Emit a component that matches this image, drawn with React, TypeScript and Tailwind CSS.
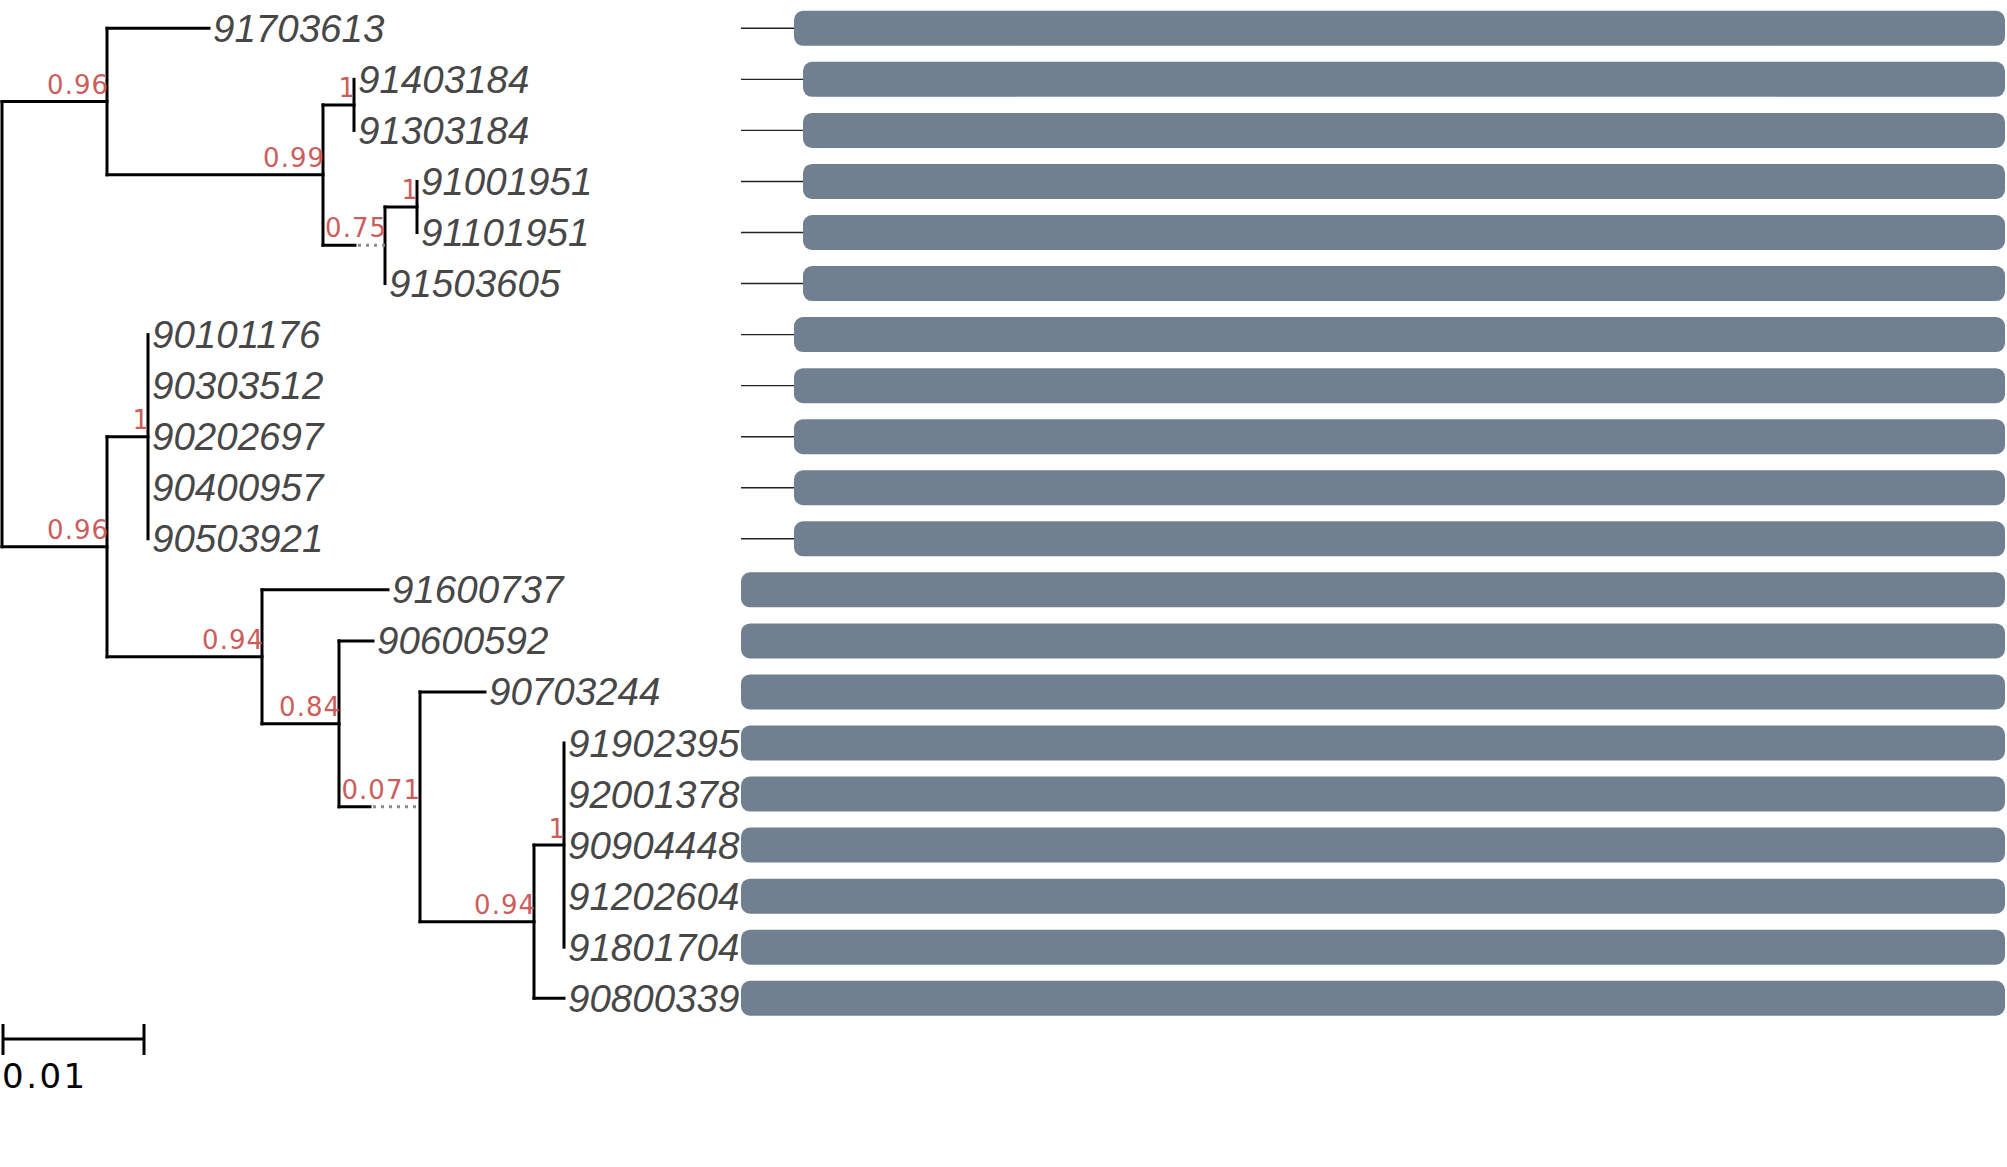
import React from "react";

// posiciones de filas (hojas) en el árbol
const ROW0 = 28.3;
const ROW_H = 51.05;
const Y = (r: number) => ROW0 + ROW_H * r;

const LEAVES: { name: string; x: number; bar: number }[] = [
  { name: "91703613", x: 213, bar: 794 },
  { name: "91403184", x: 358, bar: 803 },
  { name: "91303184", x: 358, bar: 803 },
  { name: "91001951", x: 421, bar: 803 },
  { name: "91101951", x: 421, bar: 803 },
  { name: "91503605", x: 389, bar: 803 },
  { name: "90101176", x: 152, bar: 794 },
  { name: "90303512", x: 152, bar: 794 },
  { name: "90202697", x: 152, bar: 794 },
  { name: "90400957", x: 152, bar: 794 },
  { name: "90503921", x: 152, bar: 794 },
  { name: "91600737", x: 392, bar: 741 },
  { name: "90600592", x: 377, bar: 741 },
  { name: "90703244", x: 489, bar: 741 },
  { name: "91902395", x: 568, bar: 741 },
  { name: "92001378", x: 568, bar: 741 },
  { name: "90904448", x: 568, bar: 741 },
  { name: "91202604", x: 568, bar: 741 },
  { name: "91801704", x: 568, bar: 741 },
  { name: "90800339", x: 568, bar: 741 },
];

// ramas sólidas [x1, y1, x2, y2]
const yA = (Y(0) + 174.5) / 2;
const yC = (104.6 + 245) / 2;
const yD = (Y(1) + Y(2)) / 2;
const yF = (Y(3) + Y(4)) / 2;
const yE = (yF + Y(5)) / 2;
const yG = Y(8);
const yL = Y(16);
const yK = (yL + Y(19)) / 2;
const yJ = (Y(13) + yK) / 2;
const yI = (Y(12) + yJ) / 2;
const yH = (Y(11) + yI) / 2;
const yB = (yG + yH) / 2;

const SOLID: [number, number, number, number][] = [
  // raíz
  [2, yA, 2, yB],
  [2, yA, 107, yA],
  [2, yB, 107, yB],
  // A
  [107, Y(0), 107, yC],
  [107, Y(0), 209, Y(0)],
  [107, yC, 323, yC],
  // C
  [323, yD, 323, yE],
  [323, yD, 354, yD],
  [323, yE, 355, yE],
  // D
  [354, Y(1), 354, Y(2)],
  // E
  [385, yF, 385, Y(5)],
  [385, yF, 417, yF],
  // F
  [417, Y(3), 417, Y(4)],
  // B
  [107, yG, 107, yH],
  [107, yG, 148, yG],
  [107, yH, 262, yH],
  // G
  [148, Y(6), 148, Y(10)],
  // H
  [262, Y(11), 262, yI],
  [262, Y(11), 388, Y(11)],
  [262, yI, 339, yI],
  // I
  [339, Y(12), 339, yJ],
  [339, Y(12), 373, Y(12)],
  [339, yJ, 370, yJ],
  // J
  [420, Y(13), 420, yK],
  [420, Y(13), 485, Y(13)],
  [420, yK, 534, yK],
  // K
  [534, yL, 534, Y(19)],
  [534, yL, 564, yL],
  [534, Y(19), 564, Y(19)],
  // L
  [564, Y(14), 564, Y(18)],
];

const DOTTED: [number, number, number, number][] = [
  [358, yE, 385, yE],
  [373, yJ, 420, yJ],
];

// soporte: texto, x del nodo, y de la rama de entrada
const SUPPORT: { t: string; x: number; y: number }[] = [
  { t: "0.96", x: 109, y: yA },
  { t: "0.99", x: 325, y: yC },
  { t: "1", x: 356, y: yD },
  { t: "0.75", x: 387, y: yE - 1 },
  { t: "1", x: 419, y: yF },
  { t: "0.96", x: 109, y: yB },
  { t: "1", x: 150, y: yG },
  { t: "0.94", x: 264, y: yH },
  { t: "0.84", x: 341, y: yI },
  { t: "0.071", x: 421, y: yJ },
  { t: "0.94", x: 536, y: yK },
  { t: "1", x: 566, y: yL },
];

const LABEL_FONT = "'Liberation Sans', Arial, sans-serif";
const NUM_FONT = "'DejaVu Sans', sans-serif";

const App: React.FC = () => {
  return (
    <div className="w-[2007px] h-[1167px] bg-white overflow-hidden">
      <svg width={2007} height={1167} viewBox="0 0 2007 1167" className="block">
        {/* barras */}
        {LEAVES.map((leaf, i) => (
          <g key={leaf.name}>
            {leaf.bar > 741 && (
              <line x1={741} y1={Y(i)} x2={leaf.bar} y2={Y(i)} stroke="#222" strokeWidth={1.4} />
            )}
            <rect
              x={leaf.bar}
              y={Y(i) - 17.5}
              width={2005 - leaf.bar}
              height={35}
              rx={9}
              fill="#708090"
            />
          </g>
        ))}

        {/* ramas */}
        {SOLID.map(([x1, y1, x2, y2], i) => (
          <line key={i} x1={x1} y1={y1} x2={x2} y2={y2} stroke="#000" strokeWidth={3} strokeLinecap="square" />
        ))}
        {DOTTED.map(([x1, y1, x2, y2], i) => (
          <line key={i} x1={x1} y1={y1} x2={x2} y2={y2} stroke="#8c8c8c" strokeWidth={3} strokeDasharray="3 5" />
        ))}

        {/* etiquetas de hojas */}
        {LEAVES.map((leaf, i) => (
          <text
            key={leaf.name}
            x={leaf.x}
            y={Y(i) + 13.5}
            fontFamily={LABEL_FONT}
            fontStyle="italic"
            fontSize={38.5}
            fill="#474747"
          >
            {leaf.name}
          </text>
        ))}

        {/* valores de soporte */}
        {SUPPORT.map((s, i) => (
          <text
            key={i}
            x={s.x}
            y={s.y - 7.5}
            textAnchor="end"
            fontFamily={NUM_FONT}
            fontSize={26}
            letterSpacing={1}
            fill="#cd5c5c"
          >
            {s.t}
          </text>
        ))}

        {/* escala */}
        <line x1={3} y1={1039} x2={144} y2={1039} stroke="#000" strokeWidth={3} />
        <line x1={3} y1={1024} x2={3} y2={1055} stroke="#000" strokeWidth={3} />
        <line x1={144} y1={1024} x2={144} y2={1055} stroke="#000" strokeWidth={3} />
        <text x={2} y={1088} fontFamily={NUM_FONT} fontSize={34} letterSpacing={2.5} fill="#000">
          0.01
        </text>
      </svg>
    </div>
  );
};

export default App;
